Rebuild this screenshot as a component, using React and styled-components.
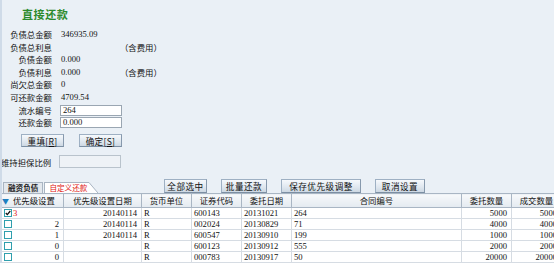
import React from "react";
import styled, { createGlobalStyle } from "styled-components";

const GlobalStyle = createGlobalStyle`
  html, body {
    margin: 0;
    padding: 0;
    width: 554px;
    height: 263px;
    overflow: hidden;
    background: #eaf0f6;
  }
  body {
    font-family: "Liberation Serif", "Noto Sans CJK SC", serif;
    font-size: 9px;
    color: #111;
  }
`;

const Page = styled.div`
  width: 554px;
  height: 263px;
  box-sizing: border-box;
  border-left: 2px solid #cfdbe8;
  overflow: hidden;
  display: flex;
  flex-direction: column;
`;

const Title = styled.h1`
  margin: 0;
  height: 28px;
  padding: 7px 0 0 20px;
  box-sizing: border-box;
  font-family: "Noto Sans CJK SC", serif;
  font-size: 11px;
  line-height: 14px;
  font-weight: 700;
  letter-spacing: 0.6px;
  color: #2c8a2c;
`;

const Info = styled.div`
  display: grid;
  grid-template-columns: 50px 63px auto;
  column-gap: 9px;
  grid-auto-rows: 12.5px;
  align-items: center;
  line-height: 12px;
`;

const Label = styled.span`
  text-align: right;
  font-family: "Noto Sans CJK SC", serif;
  font-size: 8.4px;
  white-space: nowrap;
`;

const Value = styled.span`
  font-family: "Liberation Serif", serif;
  font-size: 8.6px;
  white-space: nowrap;
`;

const Note = styled.span`
  font-family: "Noto Sans CJK SC", serif;
  font-size: 8.4px;
  margin-left: -13px;
`;

const Field = styled.div`
  width: 62px;
  height: ${(p) => p.$h || 11}px;
  box-sizing: border-box;
  border: 1px solid ${(p) => (p.$disabled ? "#b9c3cc" : "#9aa6b2")};
  background: ${(p) => (p.$disabled ? "#eef2f6" : "#fff")};
  font-family: "Liberation Serif", serif;
  font-size: 8.6px;
  line-height: 9px;
  padding-left: 2px;
  margin-left: -1px;
`;

const Inputs = styled(Info)`
  margin-top: 1px;
  grid-auto-rows: 12px;
`;

const ButtonRow = styled.div`
  display: flex;
  gap: 15px;
  padding-left: 19px;
  margin-top: 6px;
`;

const Btn = styled.button`
  width: ${(p) => p.$w}px;
  height: ${(p) => p.$h || 13}px;
  margin: 0;
  padding: 0;
  box-sizing: border-box;
  border: 1px solid #9eb0c3;
  border-bottom-color: #7c8fa3;
  border-right-color: #8799ad;
  background: linear-gradient(#f6f9fc, #dfe7ef 60%, #cdd8e3);
  font-family: "Noto Sans CJK SC", serif;
  font-size: 8.6px;
  line-height: 10px;
  color: #111;
  letter-spacing: 0.3px;
  u {
    text-decoration: underline;
  }
`;

const RatioRow = styled.div`
  display: grid;
  grid-template-columns: 50px 63px;
  column-gap: 9px;
  align-items: center;
  margin-top: 8px;
  margin-left: -1px;
`;

const Toolbar = styled.div`
  display: flex;
  align-items: flex-start;
  height: 18px;
  margin-top: 7px;
`;

const Tabs = styled.div`
  display: flex;
  align-items: flex-end;
  height: 18px;
  width: 161px;
  padding-left: 1px;
`;

const Tab = styled.div`
  height: 11px;
  box-sizing: border-box;
  padding: 0 4px;
  border: 1px solid #a9b5c2;
  border-bottom: none;
  background: ${(p) => (p.$active ? "#fff" : "#e3e8ed")};
  color: ${(p) => (p.$active ? "#e01010" : "#222")};
  font-family: "Noto Sans CJK SC", serif;
  font-size: 7.6px;
  line-height: 10px;
  font-weight: ${(p) => (p.$active ? 400 : 700)};
  white-space: nowrap;
`;

const ActiveTab = styled.div`
  display: flex;
  align-items: flex-end;
  margin-left: 1px;
  ${Tab} {
    border-right: none;
    padding-right: 1px;
  }
`;

const Actions = styled.div`
  display: flex;
  gap: 14px;
  padding-top: 4px;
  ${Btn} {
    letter-spacing: 0.5px;
  }
`;

const Table = styled.table`
  border-collapse: collapse;
  table-layout: fixed;
  width: 560px;
  background: #fff;
  margin-left: -1px;
  font-size: 8.6px;
`;

const Th = styled.th`
  height: 13px;
  padding: 0;
  border: 1px solid #a9b6c4;
  background: linear-gradient(#f7f9fb, #e4eaf0);
  font-family: "Noto Sans CJK SC", serif;
  font-weight: 400;
  font-size: 8.4px;
  line-height: 11px;
  text-align: ${(p) => p.$align || "center"};
  white-space: nowrap;
  overflow: hidden;
`;

const Td = styled.td`
  height: 10px;
  padding: 0 ${(p) => (p.$align === "right" ? "4px" : "0")} 0
    ${(p) => (p.$align === "right" ? "0" : "2px")};
  border: 1px solid #d6dce3;
  font-family: "Liberation Serif", serif;
  font-size: 8.6px;
  line-height: 10px;
  text-align: ${(p) => p.$align || "left"};
  white-space: nowrap;
  overflow: hidden;
`;

const PrioCell = styled.div`
  display: flex;
  align-items: center;
  justify-content: space-between;
  padding-right: 4px;
`;

const CheckWrap = styled.span`
  display: inline-flex;
  align-items: center;
  color: #e02020;
  gap: 1px;
`;

const Arrow = styled.span`
  color: #1d7fc0;
  font-size: 7px;
  margin-right: 4px;
`;

const Check = ({ on }) => (
  <svg width="8" height="8" viewBox="0 0 8 8">
    <rect x="0.5" y="0.5" width="7" height="7" fill="#fff" stroke="#2f9fae" />
    {on && (
      <path d="M1.8 4 L3.3 5.6 L6.3 2" fill="none" stroke="#111" strokeWidth="1.3" />
    )}
  </svg>
);

const cols = [62, 78, 50, 50, 50, 170, 50, 50];

const rows = [
  { p: "3", on: true, d: "20140114", c: "600143", e: "20131021", h: "264", q: "5000", f: "5000" },
  { p: "2", d: "20140114", c: "002024", e: "20130829", h: "71", q: "4000", f: "4000" },
  { p: "1", d: "20140114", c: "600547", e: "20130910", h: "199", q: "1000", f: "1000" },
  { p: "0", d: "", c: "600123", e: "20130912", h: "555", q: "2000", f: "2000" },
  { p: "0", d: "", c: "000783", e: "20130917", h: "50", q: "20000", f: "20000" },
];

export default function App() {
  return (
    <Page>
      <GlobalStyle />
      <Title>直接还款</Title>
      <Info>
        <Label>负债总金额</Label>
        <Value>346935.09</Value>
        <span />
        <Label>负债总利息</Label>
        <span />
        <Note>（含费用）</Note>
        <Label>负债金额</Label>
        <Value>0.000</Value>
        <span />
        <Label>负债利息</Label>
        <Value>0.000</Value>
        <Note>（含费用）</Note>
        <Label>尚欠总金额</Label>
        <Value>0</Value>
        <span />
        <Label>可还款金额</Label>
        <Value>4709.54</Value>
        <span />
      </Info>
      <Inputs>
        <Label>流水编号</Label>
        <Field>264</Field>
        <span />
        <Label>还款金额</Label>
        <Field>0.000</Field>
        <span />
      </Inputs>
      <ButtonRow>
        <Btn $w={43}>
          重填[<u>R</u>]
        </Btn>
        <Btn $w={43}>
          确定[<u>S</u>]
        </Btn>
      </ButtonRow>
      <RatioRow>
        <Label>维持担保比例</Label>
        <Field $h={13} $disabled />
      </RatioRow>
      <Toolbar>
        <Tabs>
          <Tab>融资负债</Tab>
          <ActiveTab>
            <Tab $active>自定义还款</Tab>
            <svg width="10" height="11" viewBox="0 0 10 11">
              <path d="M0 0.5 L1 0.5 L10 11 L0 11 Z" fill="#fff" />
              <path d="M0 0.5 L1 0.5 L10 11" fill="none" stroke="#a9b5c2" />
            </svg>
          </ActiveTab>
        </Tabs>
        <Actions>
          <Btn $w={43} $h={14}>全部选中</Btn>
          <Btn $w={46} $h={14}>批量还款</Btn>
          <Btn $w={80} $h={14}>保存优先级调整</Btn>
          <Btn $w={50} $h={14}>取消设置</Btn>
        </Actions>
      </Toolbar>
      <Table>
        <colgroup>
          {cols.map((w, i) => (
            <col key={i} style={{ width: w }} />
          ))}
        </colgroup>
        <thead>
          <tr>
            <Th $align="left">
              <Arrow>▼</Arrow>优先级设置
            </Th>
            <Th>优先级设置日期</Th>
            <Th>货币单位</Th>
            <Th>证券代码</Th>
            <Th>委托日期</Th>
            <Th>合同编号</Th>
            <Th>委托数量</Th>
            <Th>成交数量</Th>
          </tr>
        </thead>
        <tbody>
          {rows.map((r, i) => (
            <tr key={i}>
              <Td>
                <PrioCell>
                  <CheckWrap>
                    <Check on={r.on} />
                    {r.on ? r.p : null}
                  </CheckWrap>
                  {r.on ? null : <span>{r.p}</span>}
                </PrioCell>
              </Td>
              <Td $align="right">{r.d}</Td>
              <Td>R</Td>
              <Td>{r.c}</Td>
              <Td>{r.e}</Td>
              <Td>{r.h}</Td>
              <Td $align="right">{r.q}</Td>
              <Td $align="right">{r.f}</Td>
            </tr>
          ))}
        </tbody>
      </Table>
    </Page>
  );
}
